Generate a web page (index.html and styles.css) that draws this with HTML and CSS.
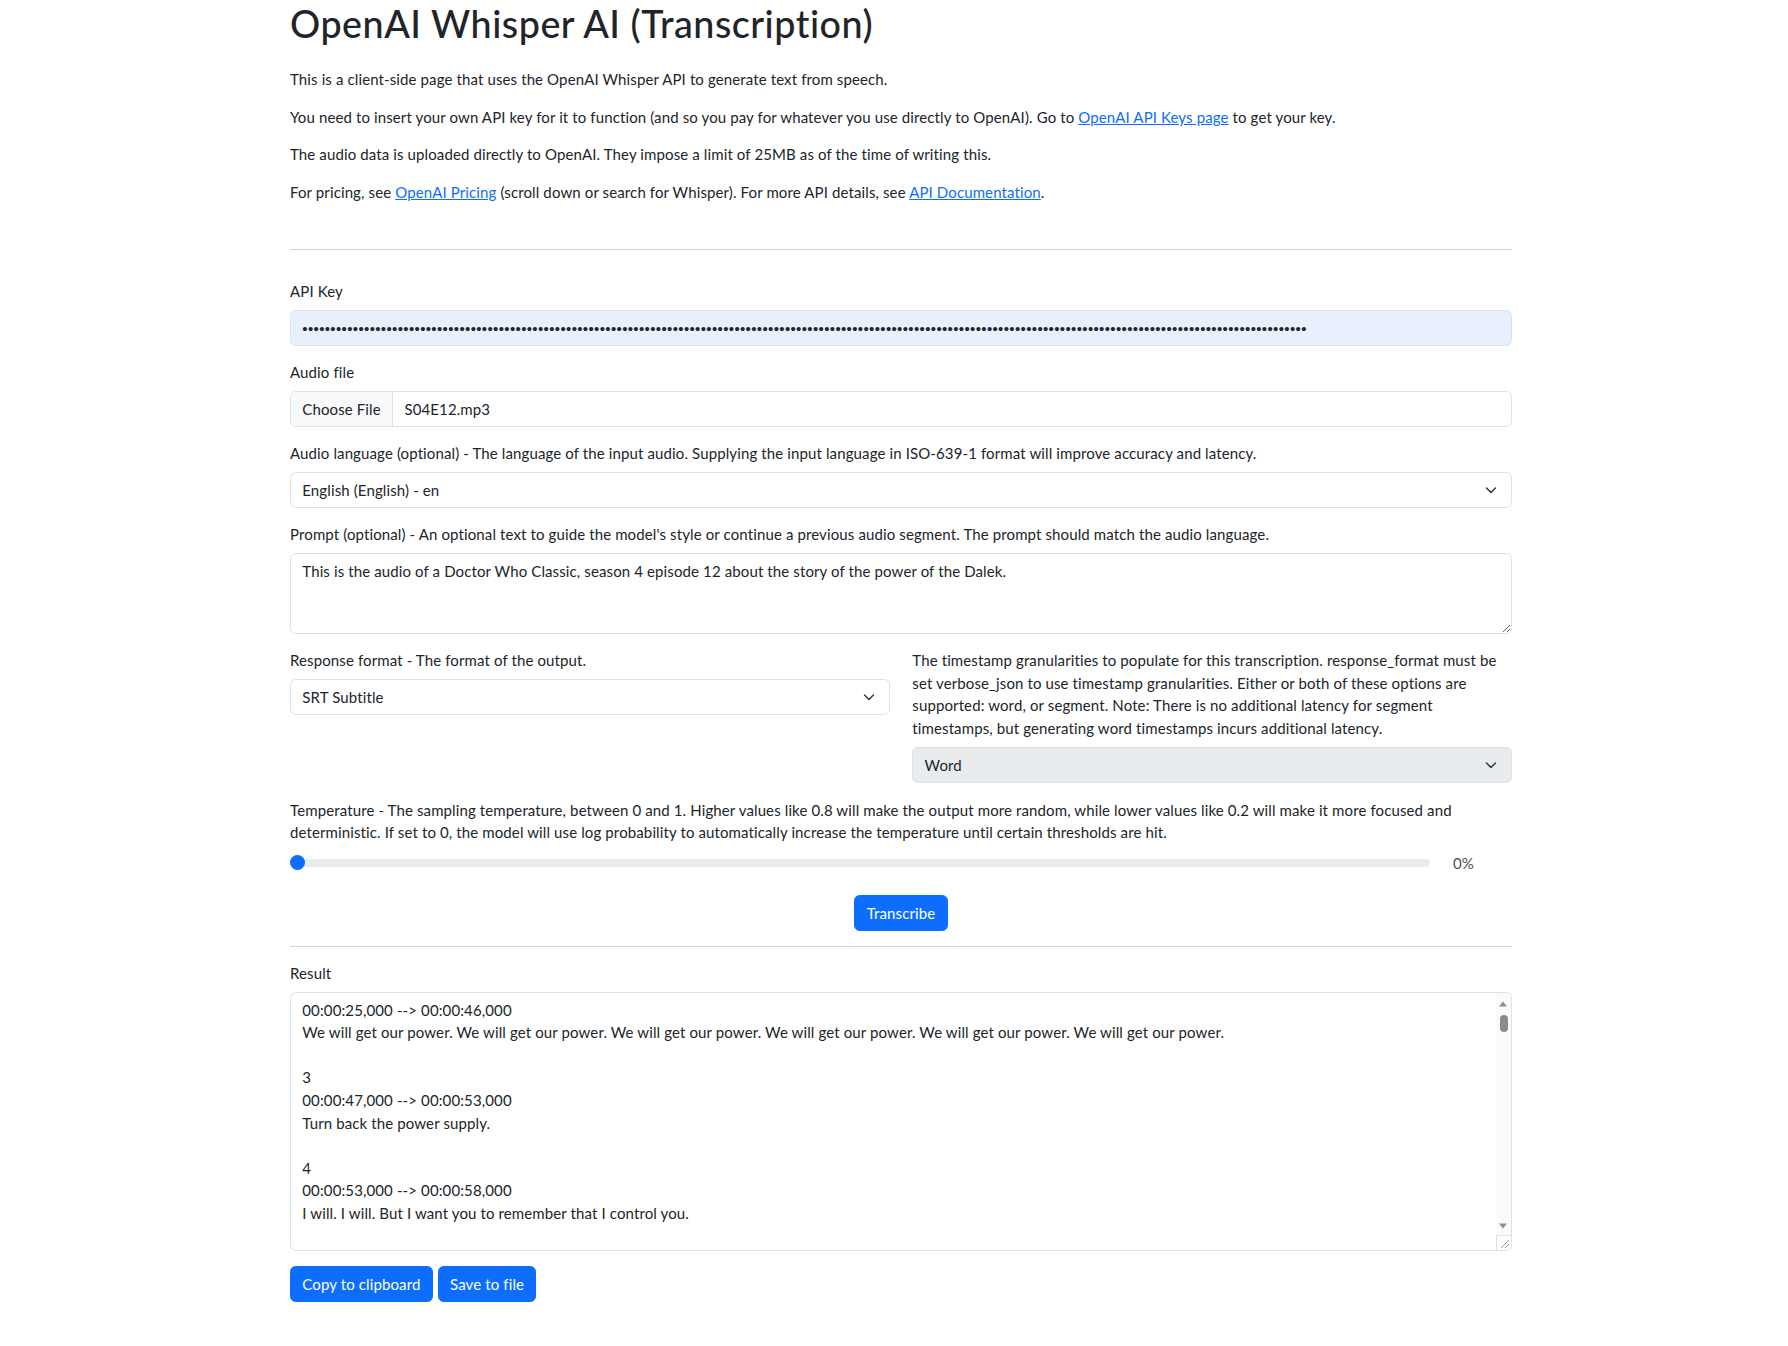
FILE: index.html
```html
<!DOCTYPE html>
<html lang="en">
<head>
<meta charset="utf-8">
<title>OpenAI Whisper AI (Transcription)</title>
<link rel="stylesheet" href="styles.css">
</head>
<body>
<div class="container">
  <h1 class="title">OpenAI Whisper AI (Transcription)</h1>
  <div class="intro">
    <p>This is a client-side page that uses the OpenAI Whisper API to generate text from speech.</p>
    <p>You need to insert your own API key for it to function (and so you pay for whatever you use directly to OpenAI). Go to <a href="#">OpenAI API Keys page</a> to get your key.</p>
    <p>The audio data is uploaded directly to OpenAI. They impose a limit of 25MB as of the time of writing this.</p>
    <p>For pricing, see <a href="#">OpenAI Pricing</a> (scroll down or search for Whisper). For more API details, see <a href="#">API Documentation</a>.</p>
  </div>
  <hr class="rule">
  <form class="form">
    <div class="group">
      <label class="label">API Key</label>
      <div class="control autofill"><span class="dots">•••••••••••••••••••••••••••••••••••••••••••••••••••••••••••••••••••••••••••••••••••••••••••••••••••••••••••••••••••••••••••••••••••••••••••••••••••••••••••••••••••••••••••••••••••</span></div>
    </div>
    <div class="group">
      <label class="label">Audio file</label>
      <div class="control file"><span class="file-btn">Choose File</span><span class="file-name">S04E12.mp3</span></div>
    </div>
    <div class="group">
      <label class="label">Audio language (optional) - The language of the input audio. Supplying the input language in ISO-639-1 format will improve accuracy and latency.</label>
      <div class="control select">English (English) - en<svg class="chev" viewBox="0 0 12 12" width="12" height="12"><path d="M1.5 4 6 8.5 10.5 4" fill="none" stroke="#343a40" stroke-width="1.5" stroke-linecap="round" stroke-linejoin="round"/></svg></div>
    </div>
    <div class="group">
      <label class="label">Prompt (optional) - An optional text to guide the model's style or continue a previous audio segment. The prompt should match the audio language.</label>
      <textarea class="control area" rows="3">This is the audio of a Doctor Who Classic, season 4 episode 12 about the story of the power of the Dalek.</textarea>
    </div>
    <div class="row group">
      <div class="col">
        <label class="label">Response format - The format of the output.</label>
        <div class="control select">SRT Subtitle<svg class="chev" viewBox="0 0 12 12" width="12" height="12"><path d="M1.5 4 6 8.5 10.5 4" fill="none" stroke="#343a40" stroke-width="1.5" stroke-linecap="round" stroke-linejoin="round"/></svg></div>
      </div>
      <div class="col">
        <label class="label">The timestamp granularities to populate for this transcription. response_format must be<br>set verbose_json to use timestamp granularities. Either or both of these options are<br>supported: word, or segment. Note: There is no additional latency for segment<br>timestamps, but generating word timestamps incurs additional latency.</label>
        <div class="control select disabled">Word<svg class="chev" viewBox="0 0 12 12" width="12" height="12"><path d="M1.5 4 6 8.5 10.5 4" fill="none" stroke="#343a40" stroke-width="1.5" stroke-linecap="round" stroke-linejoin="round"/></svg></div>
      </div>
    </div>
    <div class="group">
      <label class="label">Temperature - The sampling temperature, between 0 and 1. Higher values like 0.8 will make the output more random, while lower values like 0.2 will make it more focused and deterministic. If set to 0, the model will use log probability to automatically increase the temperature until certain thresholds are hit.</label>
      <div class="range-row">
        <div class="range"><div class="track"></div><div class="thumb"></div></div>
        <span class="range-value">0%</span>
      </div>
    </div>
    <div class="center">
      <button type="button" class="btn">Transcribe</button>
    </div>
  </form>
  <hr class="rule tight">
  <div class="group">
    <label class="label">Result</label>
    <div class="control result"><div class="result-text">00:00:25,000 --&gt; 00:00:46,000
We will get our power. We will get our power. We will get our power. We will get our power. We will get our power. We will get our power.

3
00:00:47,000 --&gt; 00:00:53,000
Turn back the power supply.

4
00:00:53,000 --&gt; 00:00:58,000
I will. I will. But I want you to remember that I control you.

5
00:00:58,000 --&gt; 00:01:02,000</div>
      <div class="scrollbar">
        <svg class="sb-up" viewBox="0 0 8 6" width="8" height="6"><path d="M0 5.5 4 0.5 8 5.5z" fill="#8f8f8f"/></svg>
        <div class="sb-thumb"></div>
        <svg class="sb-down" viewBox="0 0 8 6" width="8" height="6"><path d="M0 0.5 4 5.5 8 0.5z" fill="#8f8f8f"/></svg>
      </div>
      <div class="corner"><svg viewBox="0 0 14 14" width="14" height="14"><path d="M12 4 4 12M12 8 8 12" stroke="#9a9a9a" stroke-width="1" fill="none"/></svg></div>
    </div>
  </div>
  <div class="actions">
    <button type="button" class="btn">Copy to clipboard</button>
    <button type="button" class="btn">Save to file</button>
  </div>
</div>
</body>
</html>
```
FILE: styles.css
```css
* { box-sizing: border-box; }
html, body { margin: 0; padding: 0; background: #fff; }
body {
  font-family: Lato, "Liberation Sans", sans-serif;
  font-size: 15px;
  line-height: 22.6px;
  letter-spacing: 0.12px;
  color: #212529;
}
.container {
  width: 1222px;
  margin-left: 290px;
}
.title {
  font-size: 37.7px;
  line-height: 45px;
  font-weight: 500;
  letter-spacing: 0.5px;
  margin: 1px 0 22px;
}
.intro p { margin: 0 0 15px; }
.intro { margin-bottom: 46px; }
a { color: #0d6efd; text-decoration: underline; }
.rule {
  border: 0;
  border-top: 1px solid #d3d4d5;
  margin: 0 0 15px;
}
.rule.tight { margin-top: 15px; }
.form { padding-top: 15px; }
.group { margin-bottom: 15px; }
.label { display: block; margin-bottom: 7.5px; }
.control {
  display: block;
  width: 100%;
  height: 35.8px;
  border: 1px solid #dee2e6;
  border-radius: 5.7px;
  background: #fff;
  padding: 5.6px 11.3px;
  font: inherit;
  letter-spacing: inherit;
  color: #212529;
  line-height: 22.6px;
}
.autofill { background: #e8f0fe; overflow: hidden; white-space: nowrap; }
.dots {
  font-family: "Liberation Sans", Arial, sans-serif;
  font-size: 15px;
  letter-spacing: 0.36px;
}
.file { padding: 0; display: flex; overflow: hidden; }
.file-btn {
  background: #f8f9fa;
  border-right: 1px solid #dee2e6;
  padding: 5.6px 11.3px;
}
.file-name { padding: 5.6px 11.3px; }
.select { position: relative; }
.select.disabled { background: #e9ecef; }
.chev { position: absolute; right: 14px; top: 11px; }
.area {
  height: 81px;
  resize: vertical;
}
.row { display: flex; gap: 22.6px; margin-bottom: 16px; }
.row .col { flex: 1 1 0; min-width: 0; }
.range-row { display: flex; align-items: center; gap: 23px; }
.range { position: relative; width: 1140px; height: 22.6px; }
.track {
  position: absolute; left: 0; right: 0; top: 7.5px;
  height: 7.5px; border-radius: 8px; background: #e9ecef;
}
.thumb {
  position: absolute; left: 0; top: 3.8px;
  width: 15px; height: 15px; border-radius: 50%; background: #0d6efd;
}
.range-value { color: #495057; }
.center { text-align: center; padding-top: 6px; }
.btn {
  font: inherit;
  letter-spacing: inherit;
  line-height: 22.6px;
  color: #fff;
  background: #0d6efd;
  border: 1px solid #0d6efd;
  border-radius: 5.7px;
  padding: 5.6px 11.3px;
  cursor: pointer;
}
.result {
  position: relative;
  height: 259px;
  overflow: hidden;
  padding: 5.6px 11.3px;
}
.result-text { white-space: pre; }
.scrollbar {
  position: absolute; right: 0; top: 0; bottom: 15px; width: 15px;
  background: #fbfbfb;
}
.sb-up { position: absolute; left: 3px; top: 8px; }
.sb-down { position: absolute; left: 3px; bottom: 6px; }
.sb-thumb {
  position: absolute; left: 3.5px; top: 22px; width: 8px; height: 17px;
  border-radius: 4px; background: #8a8a8a;
}
.corner {
  position: absolute; right: 0; bottom: 0; width: 15px; height: 15px;
  background: #fff; border-top: 1px solid #e0e0e0; border-left: 1px solid #e0e0e0;
}
.corner svg { display: block; }
.actions { display: flex; gap: 5px; margin-top: 1px; }
```
